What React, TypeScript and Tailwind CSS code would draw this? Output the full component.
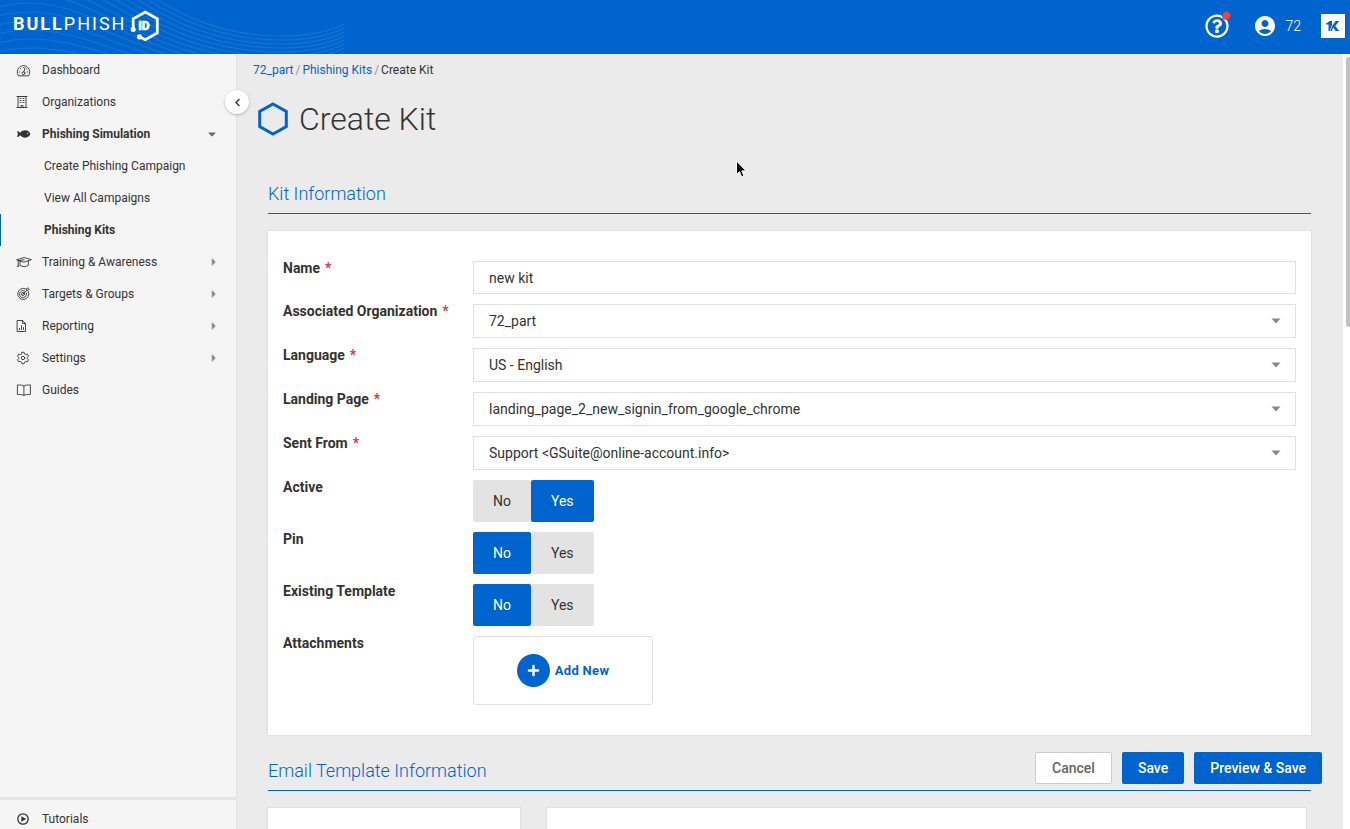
import { useState } from "react";
import type { ReactNode } from "react";
import { FaCaretDown, FaCaretRight, FaChevronLeft, FaPlus, FaRegQuestionCircle } from "react-icons/fa";
import { MdAccountCircle } from "react-icons/md";

type NavItem = {
	label: string;
	icon: ReactNode;
	caret?: "right" | "down";
	children?: string[];
};

function Glyph({ children }: { children: ReactNode }) {
	return (
		<svg viewBox="0 0 16 16" className="h-4 w-4 shrink-0" fill="none" stroke="currentColor" strokeWidth=".9" strokeLinecap="round" strokeLinejoin="round" aria-hidden="true">
			{children}
		</svg>
	);
}

const navItems: NavItem[] = [
	{
		label: "Dashboard",
		icon: (
			<Glyph>
				<path d="M2.200 13.500A6.300 6.300 0 1 1 12.800 13.500Z" />
				<path d="M9 5.600L7.900 9.800M3.200 10h.6M4.500 6.900h.4M7.200 5.500h.2M11.200 10h.6M10.700 7h.2" />
				<circle cx="7.500" cy="11.200" r="1.400" />
			</Glyph>
		),
	},
	{
		label: "Organizations",
		icon: (
			<Glyph>
				<path d="M2 13.500V2.500h8v11M1 13.500h10M5 13.500v-2h2v2M1 2.500h10" />
				<path d="M4 4.500h1M7 4.500h1M4 6.500h1M7 6.500h1M4 8.500h1M7 8.500h1" />
			</Glyph>
		),
	},
	{
		label: "Phishing Simulation",
		icon: (
			<Glyph>
				<path
					d="M1 4.900C2.200 4.900 3.300 5.800 4.200 6.700C5.500 5 7.300 4.300 9.400 4.300C11.900 4.300 13.700 6.300 14.400 8C13.700 9.700 11.900 11.700 9.400 11.700C7.300 11.700 5.500 11 4.200 9.300C3.300 10.200 2.200 11.100 1 11.100L1.900 8Z"
					fill="currentColor"
					stroke="none"
				/>
				<circle cx="11.500" cy="7.500" r=".6" fill="#f5f5f5" stroke="none" />
			</Glyph>
		),
		caret: "down",
		children: ["Create Phishing Campaign", "View All Campaigns", "Phishing Kits"],
	},
	{
		label: "Training & Awareness",
		icon: (
			<Glyph>
				<path d="M1 5.700L8.200 3.500L15.400 5.700L8.200 8.100ZM4 7v4.300C6.200 13 10.200 13 12.400 11.300V7M8.200 5.700L2.200 6.800V12M1.300 12.200h1.600" />
			</Glyph>
		),
		caret: "right",
	},
	{
		label: "Targets & Groups",
		icon: (
			<Glyph>
				<path d="M9.900 2.900A5.600 5.600 0 1 0 12.500 5.700" />
				<path d="M8.500 4.900A3.500 3.500 0 1 0 10.300 6.800" />
				<circle cx="7" cy="8" r="1.500" />
				<path d="M7 8L10.700 4.300M10.700 4.300V2.800L11.800 1.700L12 3L13.300 3.300L12.200 4.400Z" />
			</Glyph>
		),
		caret: "right",
	},
	{
		label: "Reporting",
		icon: (
			<Glyph>
				<path d="M1.500 2.500h5l3 3v8h-8ZM6.500 2.500v3h3" />
				<path d="M3.500 11.500v-1M5.500 11.500v-4M7.500 11.500v-2" />
			</Glyph>
		),
		caret: "right",
	},
	{
		label: "Settings",
		icon: (
			<Glyph>
				<path d="M5.900 2.300h2.200l.5 1.700l1.100.6l1.700-.4l1.100 1.900L11.300 7.400v1.200l1.200 1.300l-1.100 1.900l-1.700-.4l-1.100.6l-.5 1.700H5.900L5.400 12l-1.100-.6l-1.700.4L1.500 9.900l1.200-1.300V7.400L1.500 6.100l1.100-1.900l1.700.4L5.400 4Z" />
				<circle cx="7" cy="8" r="1.700" />
			</Glyph>
		),
		caret: "right",
	},
	{
		label: "Guides",
		icon: (
			<Glyph>
				<path d="M7.900 4C6.500 2.800 4.500 3 1.400 3V12.500C4.500 12.500 6.500 12.300 7.900 13.500C9.400 12.300 11.300 12.500 14.400 12.500V3C11.300 3 9.400 2.800 7.900 4V13.500" />
			</Glyph>
		),
	},
];

// wave lines behind the logo, the gap between them closes towards the right
const waveLines = [-8, -7, -6, -5, -4, -3, -2, -1, 0, 1, 2, 3, 4, 5];

function HeaderWaves() {
	return (
		<svg className="absolute left-0 top-0 h-full w-[344px]" viewBox="0 0 344 54" fill="none" stroke="#1970d4" strokeWidth="1.200" aria-hidden="true">
			{waveLines.map((n) => {
				const crest = 3 + n * 9;
				const trough = 68 + n * 4;
				return (
					<path
						key={n}
						d={`M-10 ${crest + 6}Q10 ${crest} 30 ${crest}C100 ${crest} 150 ${trough} 280 ${trough}Q320 ${trough} 344 ${trough - 12}`}
					/>
				);
			})}
		</svg>
	);
}

function Logo() {
	return (
		<a href="#" aria-label="BullPhish ID" className="relative flex items-center pl-[13px] text-white">
			<span className="pb-1 text-lg leading-6 tracking-[2px]">
				<b>BULL</b>PHISH
			</span>
			<svg className="ml-[3px] h-8 w-8" viewBox="0 0 32 32" fill="none" stroke="#fff" strokeWidth="2.800" aria-hidden="true">
				<path d="M4.200 19V8.800L16.300 2L28.300 8.800V23L16.300 29.700L10.500 26.800" />
				<circle cx="4.200" cy="19.500" r="2.500" fill="#fff" stroke="none" />
				<circle cx="10.500" cy="26.800" r="2.600" fill="#fff" stroke="none" />
				<text x="9.200" y="20.200" fill="#fff" stroke="#fff" strokeWidth=".5" fontSize="12" fontWeight="900">
					ID
				</text>
			</svg>
		</a>
	);
}

function Header() {
	return (
		<header className="relative flex h-[54px] shrink-0 items-center justify-between overflow-hidden bg-[#0064cf] pr-[5px] pb-[2px]">
			<HeaderWaves />
			<Logo />
			<div className="flex items-center text-white">
				<button type="button" aria-label="Help" className="relative mr-6">
					<FaRegQuestionCircle size={24} />
					<span className="absolute -top-[3px] -right-[2px] h-[9px] w-[9px] rounded-full border border-[#b8384c] bg-[#de4b4e]" />
				</button>
				<button type="button" className="mr-5 flex items-center gap-2 text-sm font-light">
					<MdAccountCircle size={24} />
					72
				</button>
				<a href="#" aria-label="Kaseya" className="block h-6 w-6 bg-white">
					<svg viewBox="0 0 24 24" fill="#0064cf" aria-hidden="true">
						<path d="M5 9.200C6.600 9 7.600 8.300 8.300 7H11V11L8.600 17H7.500V10.500H5Z" />
						<path d="M14.600 7H18.300L14.200 12L18.300 17H14.600L12.200 13.600L10.800 17H9.200L11.500 11.500Z" />
					</svg>
				</a>
			</div>
		</header>
	);
}

function Sidebar() {
	return (
		<nav className="relative flex w-[237px] shrink-0 flex-col border-r border-[#e0e0e0] bg-[#f5f5f5] text-xs text-[#333]">
			<ul className="flex-1">
				{navItems.map((item) => (
					<li key={item.label}>
						<a href="#" className={item.children ? "flex h-8 items-center px-4 font-bold" : "flex h-8 items-center px-4"}>
							{item.icon}
							<span className="ml-[10px] flex-1">{item.label}</span>
							{item.caret === "down" && <FaCaretDown size={12} className="mr-[2px] text-[#666]" />}
							{item.caret === "right" && <FaCaretRight size={12} className="text-[#8c8c8c]" />}
						</a>
						{item.children && (
							<ul>
								{item.children.map((child) => (
									<li key={child}>
										<a
											href="#"
											className={
												child === "Phishing Kits"
													? "flex h-8 items-center border-l border-[#0064cf] pl-[43px] font-bold"
													: "flex h-8 items-center pl-11"
											}
										>
											{child}
										</a>
									</li>
								))}
							</ul>
						)}
					</li>
				))}
			</ul>
			<a href="#" className="flex h-8 items-center border-t-3 border-[#e4e4e4] pt-2 pl-4">
				<Glyph>
					<circle cx="7" cy="8" r="5.200" strokeWidth="1.300" />
					<path d="M5.300 5.200L10.200 8L5.300 10.800Z" fill="currentColor" stroke="none" />
				</Glyph>
				<span className="ml-[10px]">Tutorials</span>
			</a>
			<button
				type="button"
				aria-label="Collapse menu"
				className="absolute top-9 -right-[13px] z-10 flex h-6 w-6 items-center justify-center rounded-full bg-white text-[#333] shadow-[0_1px_3px_rgba(0,0,0,0.25)]"
			>
				<FaChevronLeft size={9} />
			</button>
		</nav>
	);
}

function SectionTitle({ children }: { children: ReactNode }) {
	return <h2 className="mx-px border-b border-[#0064cf] pb-[7px] text-lg leading-6 font-light text-[#0064cf]">{children}</h2>;
}

function Row({ label, htmlFor, required, children }: { label: string; htmlFor: string; required?: boolean; children: ReactNode }) {
	return (
		<div className="flex">
			<label htmlFor={htmlFor} className="w-[190px] shrink-0 text-sm leading-[14px] font-bold">
				{label}
				{required && <span className="ml-[5px] text-[#dc3545]">*</span>}
			</label>
			<div className="flex flex-1">{children}</div>
		</div>
	);
}

function SelectBox({ id, value }: { id: string; value: string }) {
	return (
		<div className="relative flex-1">
			<select id={id} className="h-[34px] w-full appearance-none border border-[#e0e0e0] bg-white px-[15px] text-sm">
				<option>{value}</option>
			</select>
			<svg className="pointer-events-none absolute top-[14px] right-[15px] h-[6px] w-[10px]" viewBox="0 0 10 6" fill="#888" aria-hidden="true">
				<path d="M.5 .5H9.500L5 5.500Z" />
			</svg>
		</div>
	);
}

const onStyle = "h-[42px] rounded-[2px] bg-[#0064cf] px-5 text-sm text-white";
const offStyle = "h-[42px] rounded-[2px] bg-[#e3e3e3] px-5 text-sm text-[#333]";

function Toggle({ id, initial }: { id: string; initial: boolean }) {
	const [on, setOn] = useState(initial);

	return (
		<div className="flex">
			<button id={id} type="button" aria-pressed={!on} onClick={() => setOn(false)} className={on ? offStyle : onStyle}>
				No
			</button>
			<button type="button" aria-pressed={on} onClick={() => setOn(true)} className={on ? onStyle : offStyle}>
				Yes
			</button>
		</div>
	);
}

function KitForm() {
	return (
		<form className="mt-4 flex flex-col gap-[10px] border border-[#e0e0e0] bg-white px-[15px] py-[30px]">
			<Row label="Name" htmlFor="name" required>
				<input id="name" type="text" defaultValue="new kit" className="h-[33px] w-full border border-[#e0e0e0] px-[15px] text-sm" />
			</Row>
			<Row label="Associated Organization" htmlFor="organization" required>
				<SelectBox id="organization" value="72_part" />
			</Row>
			<Row label="Language" htmlFor="language" required>
				<SelectBox id="language" value="US - English" />
			</Row>
			<Row label="Landing Page" htmlFor="landing" required>
				<SelectBox id="landing" value="landing_page_2_new_signin_from_google_chrome" />
			</Row>
			<Row label="Sent From" htmlFor="sender" required>
				<SelectBox id="sender" value="Support <GSuite@online-account.info>" />
			</Row>
			<Row label="Active" htmlFor="active">
				<Toggle id="active" initial={true} />
			</Row>
			<Row label="Pin" htmlFor="pin">
				<Toggle id="pin" initial={false} />
			</Row>
			<Row label="Existing Template" htmlFor="existing">
				<Toggle id="existing" initial={false} />
			</Row>
			<Row label="Attachments" htmlFor="attachments">
				<button
					id="attachments"
					type="button"
					className="flex h-[69px] w-[180px] items-center justify-center gap-[5px] rounded-[3px] border border-[#e0e0e0] text-[13px] font-bold tracking-wide text-[#0064cf]"
				>
					<span className="flex h-[33px] w-[33px] items-center justify-center rounded-full bg-[#0064cf] text-white">
						<FaPlus size={13} />
					</span>
					Add New
				</button>
			</Row>
		</form>
	);
}

function Cursor() {
	return (
		<svg className="pointer-events-none absolute top-[160px] left-[735px] z-20 h-5 w-3" viewBox="0 0 12 20" aria-hidden="true">
			<path d="M1.500 1V14.500L4.500 11.700L6.600 16.800L8.900 15.900L6.800 10.900H11Z" fill="#000" stroke="#fff" strokeWidth="1" />
		</svg>
	);
}

function App() {
	return (
		<div className="relative flex h-screen flex-col overflow-hidden bg-[#ebebeb] font-[Roboto,sans-serif] text-[#333]">
			<Header />
			<div className="flex min-h-0 flex-1">
				<Sidebar />
				<main className="min-w-0 flex-1 overflow-hidden">
					<p className="px-4 pt-2 text-xs leading-4">
						<a href="#" className="text-[#0064cf]">72_part</a>
						<span className="mx-[2px] text-[#999]">/</span>
						<a href="#" className="text-[#0064cf]">Phishing Kits</a>
						<span className="mx-[2px] text-[#999]">/</span>
						<span>Create Kit</span>
					</p>
					<div className="mt-[21px] flex items-center gap-[10px] pl-5">
						<svg className="h-9 w-8" viewBox="0 0 32 36" fill="none" stroke="#0064cf" strokeWidth="3" aria-hidden="true">
							<path d="M16 3L29.300 10.500V25.500L16 33L2.700 25.500V10.500Z" />
						</svg>
						<h1 className="text-[32px] leading-10 font-light">Create Kit</h1>
					</div>
					<div className="mt-[43px] pr-[31px] pl-[30px]">
						<SectionTitle>Kit Information</SectionTitle>
						<KitForm />
						<div className="mt-[23px]">
							<SectionTitle>Email Template Information</SectionTitle>
						</div>
						<div className="mt-4 flex gap-[25px] pr-[5px]">
							<div className="h-40 w-[254px] border border-[#e0e0e0] bg-white" />
							<div className="h-40 flex-1 border border-[#e0e0e0] bg-white" />
						</div>
					</div>
				</main>
				<div className="w-[7px] shrink-0 bg-white pt-[3px] pl-[3px]">
					<div className="h-[270px] rounded-l-[3px] bg-[#c1c1c1]" />
				</div>
			</div>
			<div className="absolute right-7 bottom-[45px] z-10 flex gap-[10px] text-sm font-medium">
				<button type="button" className="h-8 rounded-[2px] border border-[#ccc] bg-white px-4 text-[#666]">Cancel</button>
				<button type="button" className="h-8 rounded-[2px] bg-[#0064cf] px-4 text-white">Save</button>
				<button type="button" className="h-8 rounded-[2px] bg-[#0064cf] px-4 text-white">Preview &amp; Save</button>
			</div>
			<Cursor />
		</div>
	);
}

export default App;
